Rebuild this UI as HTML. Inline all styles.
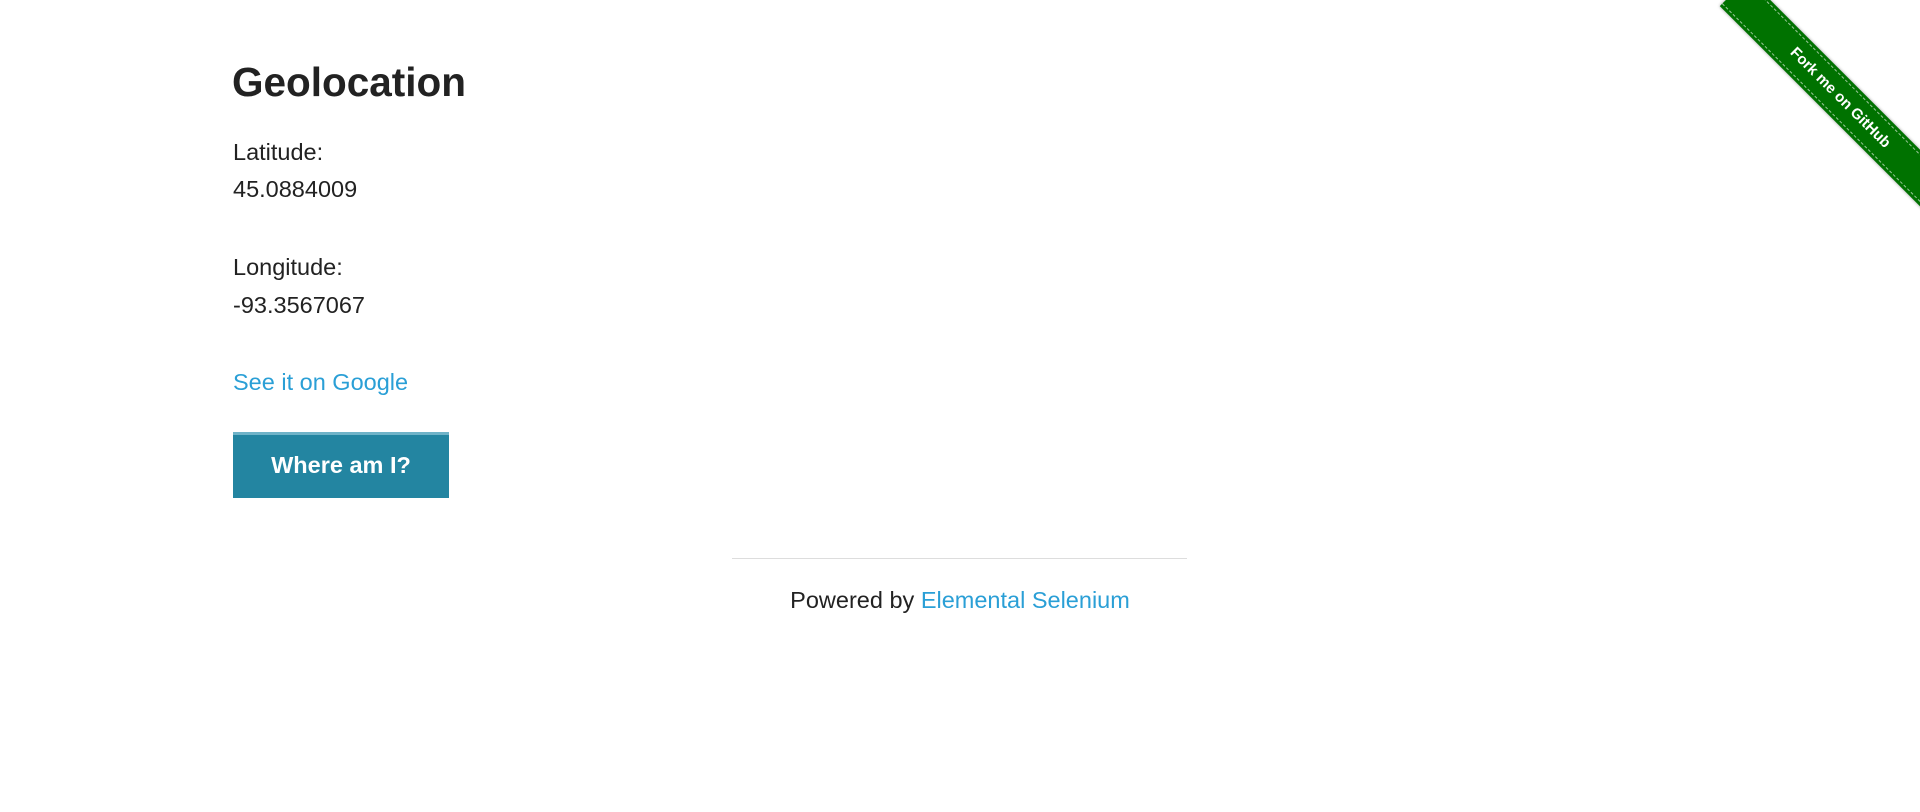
<!DOCTYPE html>
<html><head><meta charset="utf-8"><style>
html,body{margin:0;padding:0;background:#fff;width:1920px;height:812px;overflow:hidden;position:relative;font-family:"Liberation Sans",Arial,sans-serif;color:#222;}
.a{position:absolute;white-space:nowrap;}
.t{font-size:23.5px;}
h3{position:absolute;margin:0;left:232px;top:59px;font-size:40.5px;font-weight:bold;color:#222;}
.link{color:#2a9fd6;}
.btn{position:absolute;left:233px;top:432px;width:216px;height:66px;background:#2385a1;border-top:3px solid #6fb3c8;box-sizing:border-box;color:#fff;font-weight:bold;font-size:23.5px;text-align:center;line-height:60px;}
hr{position:absolute;margin:0;border:0;border-top:1px solid #ddd;left:732px;width:455px;top:558px;}
.rib{position:absolute;left:1690px;top:78px;width:300px;height:40px;background:#007200;transform:rotate(45deg);transform-origin:center;box-shadow:0 0 3px rgba(0,0,0,.4);}
.rib span{position:absolute;left:0;right:0;top:3px;bottom:3px;border-top:1px dashed rgba(255,255,255,.6);border-bottom:1px dashed rgba(255,255,255,.6);color:#fff;font-weight:bold;font-size:15px;text-align:center;line-height:32px;font-family:"Liberation Sans",sans-serif;}
</style></head><body>
<h3>Geolocation</h3>
<div class="a t" style="left:233px;top:139px">Latitude:</div>
<div class="a t" style="left:233px;top:176px">45.0884009</div>
<div class="a t" style="left:233px;top:254px">Longitude:</div>
<div class="a t" style="left:233px;top:292px">-93.3567067</div>
<div class="a t link" style="left:233px;top:369px">See it on Google</div>
<div class="btn">Where am I?</div>
<hr>
<div class="a t" style="left:0;width:1920px;text-align:center;top:587px">Powered by <span class="link">Elemental Selenium</span></div>
<div class="rib"><span>Fork me on GitHub</span></div>
</body></html>
